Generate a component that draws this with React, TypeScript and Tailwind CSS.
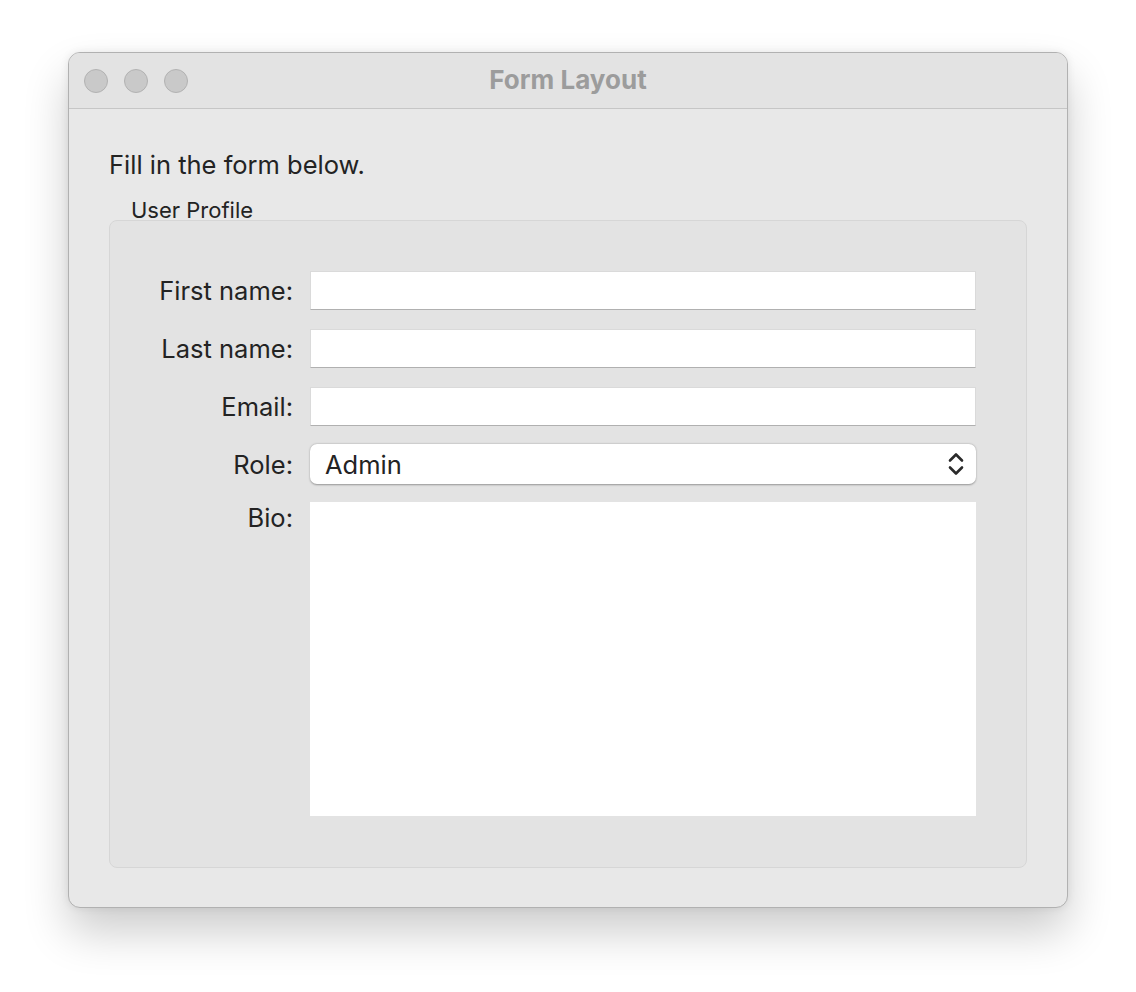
const fields = ['First name:', 'Last name:', 'Email:']

function TextField() {
  return <div className="h-[39px] bg-white border border-[#dadada] border-b-[#b0b0b0]" />
}

function UpDown() {
  return (
    <svg width="18" height="26" viewBox="0 0 18 26" fill="none" stroke="#2a2a2a" strokeWidth="2.6" strokeLinecap="round" strokeLinejoin="round">
      <path d="M3 9.5 L9 3.5 L15 9.5" />
      <path d="M3 16.5 L9 22.5 L15 16.5" />
    </svg>
  )
}

export default function App() {
  return (
    <div className="min-h-[992px] w-[1136px] bg-white pt-[52px] pl-[68px] font-['Inter','Liberation_Sans',sans-serif] text-[#232323]">
      <div className="w-[1000px] h-[856px] rounded-[12px] border border-[#b1b1b1] bg-[#e8e8e8] overflow-hidden shadow-[0_24px_45px_rgba(0,0,0,0.2),0_0_8px_rgba(0,0,0,0.08)]">
        {/* Title bar */}
        <div className="relative h-[56px] bg-[#e3e3e3] border-b border-[#c6c6c6] flex items-center pl-[15px]">
          <div className="flex gap-[16px]">
            <span className="w-[24px] h-[24px] rounded-full bg-[#c9c9c9] border border-[#b2b2b2]" />
            <span className="w-[24px] h-[24px] rounded-full bg-[#c9c9c9] border border-[#b2b2b2]" />
            <span className="w-[24px] h-[24px] rounded-full bg-[#c9c9c9] border border-[#b2b2b2]" />
          </div>
          <div className="absolute inset-0 pb-[3px] flex items-center justify-center text-[26px] leading-[31px] font-bold text-[#9c9c9c] pointer-events-none">
            Form Layout
          </div>
        </div>

        {/* Content */}
        <div className="pl-[40px] pr-[40px] pt-[40px]">
          <p className="text-[25.5px] leading-[31px]">Fill in the form below.</p>
          <div className="mt-[17px] pl-[22px] text-[22px] leading-[26px]">User Profile</div>
          <div className="-mt-[3px] h-[648px] rounded-[8px] border border-[#d6d6d6] bg-[#e3e3e3] pt-[50px]">
            <div className="grid grid-cols-[183px_666px] gap-x-[17px] gap-y-[19px] text-[25.5px] leading-[31px] items-center">
              {fields.map((f) => (
                <div key={f} className="contents">
                  <div className="text-right">{f}</div>
                  <TextField />
                </div>
              ))}
              <div className="text-right -mt-[1px]">Role:</div>
              <div className="-mt-[1px] h-[40px] rounded-[7px] bg-white shadow-[0_0.5px_2px_rgba(0,0,0,0.35)] flex items-center justify-between pl-[15px] pr-[11px]">
                <span>Admin</span>
                <UpDown />
              </div>
              <div className="self-start text-right -mt-[1px]">Bio:</div>
              <div className="-mt-[1px] h-[314px] bg-white" />
            </div>
          </div>
        </div>
      </div>
    </div>
  )
}
